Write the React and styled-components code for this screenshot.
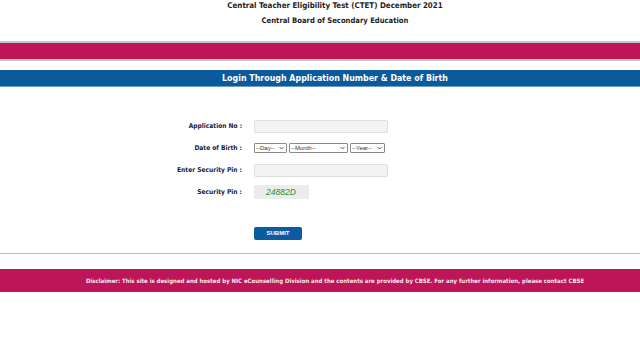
import React from 'react';
import styled, { createGlobalStyle } from 'styled-components';

const Global = createGlobalStyle`
  body {
    margin: 0;
    background: #fff;
    font-family: "DejaVu Sans Condensed", "DejaVu Sans", Verdana, sans-serif;
  }
`;

const Page = styled.div`
  width: 640px;
  height: 360px;
  display: flex;
  flex-direction: column;
`;

const Header = styled.div`
  display: flex;
  flex-direction: column;
  align-items: center;
  padding-left: 30px;
  padding-top: 1px;
  height: 40px;
  box-sizing: border-box;
`;

const Title = styled.div`
  font-size: ${p => p.size}px;
  font-weight: bold;
  color: #1e1e1e;
  line-height: 10px;
  margin-top: ${p => p.mt || 0}px;
`;

const Band = styled.div`
  height: 16px;
  background: #be1558;
  border-top: 2px solid #c8c8c8;
  border-bottom: 2px solid #c8c8c8;
  margin-top: 1px;
`;

const BlueBar = styled.div`
  margin-top: 9px;
  height: 16px;
  background: #0a5a9c;
  border-bottom: 1px solid #6d9cc9;
  color: #fff;
  font-size: 8.8px;
  font-weight: bold;
  display: flex;
  align-items: center;
  justify-content: center;
  padding-left: 30px;
`;

const Form = styled.div`
  margin-top: 32px;
  display: grid;
  grid-template-columns: 242px 1fr;
  column-gap: 12px;
  grid-auto-rows: 14px;
  row-gap: 8px;
  align-items: center;
`;

const Label = styled.div`
  text-align: right;
  font-size: 6.6px;
  font-weight: bold;
  color: #1a1a40;
`;

const TextBox = styled.div`
  width: 132px;
  height: 11px;
  border: 1px solid #dedede;
  border-radius: 2px;
  background: #f3f3f3;
`;

const Selects = styled.div`
  display: flex;
  gap: 2px;
`;

const Select = styled.div`
  width: ${p => p.w}px;
  height: 10px;
  box-sizing: border-box;
  border: 1px solid #8a8a8a;
  border-radius: 1px;
  display: flex;
  align-items: center;
  justify-content: space-between;
  padding: 0 2px 0 1px;
  font-size: 6px;
  color: #333;
  font-family: "Liberation Sans", Arial, sans-serif;
`;

const Caret = styled.svg`
  width: 5px;
  height: 4px;
`;

const Captcha = styled.div`
  width: 55px;
  height: 14px;
  background: #ececec;
  display: flex;
  align-items: center;
  padding-left: 12px;
  box-sizing: border-box;
  color: #2a8c2a;
  font-style: italic;
  font-size: 8.5px;
  font-family: "Liberation Sans", Arial, sans-serif;
`;

const ButtonRow = styled.div`
  margin-top: 21px;
  padding-left: 254px;
`;

const Submit = styled.button`
  width: 48px;
  height: 13px;
  padding: 0;
  border: none;
  border-radius: 2px;
  background: #0c5aa0;
  color: #fff;
  font-size: 6px;
  font-weight: bold;
  font-family: "Liberation Sans", Arial, sans-serif;
`;

const Rule = styled.div`
  margin-top: 13px;
  height: 1px;
  background: #b9b9cc;
`;

const Footer = styled.div`
  margin-top: 15px;
  height: 23px;
  background: #be1558;
  color: #f4e6ec;
  font-size: 6px;
  font-weight: bold;
  display: flex;
  align-items: center;
  justify-content: center;
  padding-left: 30px;
`;

function Dropdown({ w, text }) {
  return (
    <Select w={w}>
      <span>{text}</span>
      <Caret viewBox="0 0 10 6">
        <path d="M1 1 L5 5 L9 1" fill="none" stroke="#333" strokeWidth="1.6" />
      </Caret>
    </Select>
  );
}

export default function App() {
  return (
    <Page>
      <Global />
      <Header>
        <Title size={7.9}>Central Teacher Eligibility Test (CTET) December 2021</Title>
        <Title size={7.6} mt={5}>Central Board of Secondary Education</Title>
      </Header>
      <Band />
      <BlueBar>Login Through Application Number &amp; Date of Birth</BlueBar>
      <Form>
        <Label>Application No :</Label>
        <TextBox />
        <Label>Date of Birth :</Label>
        <Selects>
          <Dropdown w={33} text="--Day--" />
          <Dropdown w={59} text="--Month--" />
          <Dropdown w={35} text="--Year--" />
        </Selects>
        <Label>Enter Security Pin :</Label>
        <TextBox />
        <Label>Security Pin :</Label>
        <Captcha>24882D</Captcha>
      </Form>
      <ButtonRow>
        <Submit>SUBMIT</Submit>
      </ButtonRow>
      <Rule />
      <Footer>Disclaimer: This site is designed and hosted by NIC eCounselling Division and the contents are provided by CBSE. For any further information, please contact CBSE</Footer>
    </Page>
  );
}
